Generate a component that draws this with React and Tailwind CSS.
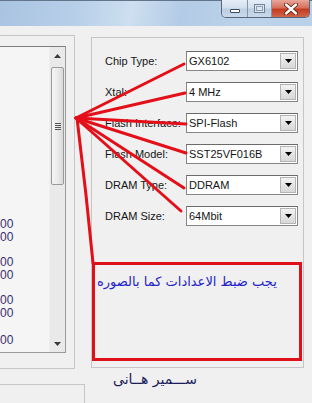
export default function App() {
  const rows = [
    ["Chip Type:", "GX6102"],
    ["Xtal:", "4 MHz"],
    ["Flash Interface:", "SPI-Flash"],
    ["Flash Model:", "SST25VF016B"],
    ["DRAM Type:", "DDRAM"],
    ["DRAM Size:", "64Mbit"],
  ];
  return (
    <div className="relative w-[312px] h-[403px] overflow-hidden bg-[#f0f0f0] font-['Liberation_Sans',Arial,sans-serif] text-[11px] text-[#151515]">
      {/* title bar */}
      <div className="relative h-[26px] border-t border-[#62758a] bg-[linear-gradient(100deg,#a9c3e1_0%,#b8cfe9_25%,#cddff0_42%,#b3cbe6_58%,#bdd3ea_80%,#b9d0e9_100%)]">
        <div className="absolute right-[2px] top-[-1px] flex h-[18px] rounded-b-[5px] border border-t-0 border-[#55677c] overflow-hidden">
          <div className="flex w-[26px] items-end justify-center pb-[4px] bg-[linear-gradient(180deg,#e6eef7_0%,#d3e0ee_45%,#bccfe4_55%,#c9d9ea_100%)] border-r border-[#8494a6]">
            <div className="h-[4px] w-[10px] rounded-[1px] border border-[#3a4a5c] bg-white"></div>
          </div>
          <div className="flex w-[24px] items-center justify-center bg-[linear-gradient(180deg,#e6eef7_0%,#d3e0ee_45%,#bccfe4_55%,#c9d9ea_100%)] border-r border-[#8494a6]">
            <div className="h-[9px] w-[11px] border border-[#6f8196] bg-[#dde6f0] flex items-center justify-center">
              <div className="h-[5px] w-[7px] border border-[#8fa0b3]"></div>
            </div>
          </div>
          <div className="flex w-[37px] items-center justify-center bg-[linear-gradient(180deg,#e9a79b_0%,#d6715e_45%,#c43c22_55%,#d2654a_100%)]">
            <svg width="14" height="12" viewBox="0 0 14 12">
              <path d="M2 1.5 L12 10.5 M12 1.5 L2 10.5" stroke="#5a1a10" strokeWidth="4" strokeLinecap="round" />
              <path d="M2 1.5 L12 10.5 M12 1.5 L2 10.5" stroke="#ffffff" strokeWidth="2.4" strokeLinecap="round" />
            </svg>
          </div>
        </div>
      </div>

      {/* content */}
      <div className="flex pt-[9px]">
        {/* left panel */}
        <div className="w-[75px] h-[334px] border-y border-r border-[#c6c6c6] pt-[10px]">
          <div className="flex w-[66px] h-[307px] border-y border-r border-[#9b9b9b] border-t-[#7d7d7d] bg-[#f5f5f5]">
            <div className="w-[49px] overflow-hidden pt-[171px] text-[12px] leading-[13px] text-[#3b2d6e]">
              <div>00</div>
              <div>00</div>
              <div className="mt-[12px]">00</div>
              <div>00</div>
              <div className="mt-[12px]">00</div>
              <div>00</div>
              <div className="mt-[14px]">00</div>
            </div>
            <div className="flex w-[16px] flex-col bg-[#e9e9e9] border-l border-[#efefef]">
              <div className="flex h-[17px] items-center justify-center">
                <svg width="7" height="4" viewBox="0 0 7 4"><path d="M0 4 L3.5 0 L7 4 Z" fill="#3a3a3a" /></svg>
              </div>
              <div className="mx-[1px] mt-[3px] h-[118px] rounded-[2px] border border-[#9a9a9a] bg-[linear-gradient(90deg,#f5f5f5_0%,#ececec_45%,#d9d9d9_100%)] flex flex-col items-center justify-center gap-[1px]">
                <div className="h-[1px] w-[6px] bg-[#555]"></div>
                <div className="h-[1px] w-[6px] bg-[#555]"></div>
                <div className="h-[1px] w-[6px] bg-[#555]"></div>
                <div className="h-[1px] w-[6px] bg-[#555]"></div>
              </div>
              <div className="flex-1"></div>
              <div className="flex h-[17px] items-center justify-center">
                <svg width="7" height="4" viewBox="0 0 7 4"><path d="M0 0 L7 0 L3.5 4 Z" fill="#3a3a3a" /></svg>
              </div>
            </div>
          </div>
        </div>

        {/* group box */}
        <div className="ml-[16px] mt-[2px] w-[213px] h-[331px] border border-[#c6c6c6] pt-[13px]">
          <div className="flex flex-col gap-[11px] pl-[13px] pr-[5px]">
            {rows.map(([label, value]) => (
              <div key={label} className="flex h-[20px] items-center">
                <div className="w-[81px] whitespace-nowrap">{label}</div>
                <div className="flex h-[20px] w-[112px] border border-[#858585] border-t-[#6a6a6a] bg-white">
                  <div className="flex-1 pl-[2px] leading-[18px] whitespace-nowrap">{value}</div>
                  <div className="m-[1px] flex w-[16px] items-center justify-center border border-[#b4b4b4] bg-[linear-gradient(180deg,#f3f3f3_0%,#e4e4e4_50%,#d8d8d8_100%)]">
                    <svg width="7" height="4" viewBox="0 0 7 4"><path d="M0 0 L7 0 L3.5 4 Z" fill="#000" /></svg>
                  </div>
                </div>
              </div>
            ))}
          </div>
          <div className="mt-[36px] h-[99px] w-[210px] border-[3px] border-[#e0101a] pt-[9px] pl-[2px]">
            <div dir="rtl" className="text-left font-['DejaVu_Sans',sans-serif] text-[13px] leading-[16px] text-[#2424c8] whitespace-nowrap">
              يجب ضبط الاعدادات كما بالصوره
            </div>
          </div>
        </div>
      </div>

      {/* bottom */}
      <div className="flex">
        <div className="mt-[15px] h-[30px] w-[85px] border-t border-r border-[#c6c6c6]"></div>
        <div dir="rtl" className="ml-[28px] mt-[2px] font-['DejaVu_Sans',sans-serif] text-[14px] leading-[17px] text-[#1c1c5c] whitespace-nowrap">
          ســـمير هــانى
        </div>
      </div>

      {/* red annotation lines */}
      <svg className="pointer-events-none absolute left-0 top-0" width="312" height="403" viewBox="0 0 312 403">
        <g stroke="#e3101a" strokeWidth="3" strokeLinecap="round" fill="none">
          <path d="M76 118 L184 64" />
          <path d="M76 118 L185 93" />
          <path d="M76 118 L186 124" />
          <path d="M76 118 L186 153" />
          <path d="M76 118 L184 188" />
          <path d="M76 118 L181 211" />
          <path d="M77 118 L86 195 L93 263" />
        </g>
      </svg>
    </div>
  );
}
